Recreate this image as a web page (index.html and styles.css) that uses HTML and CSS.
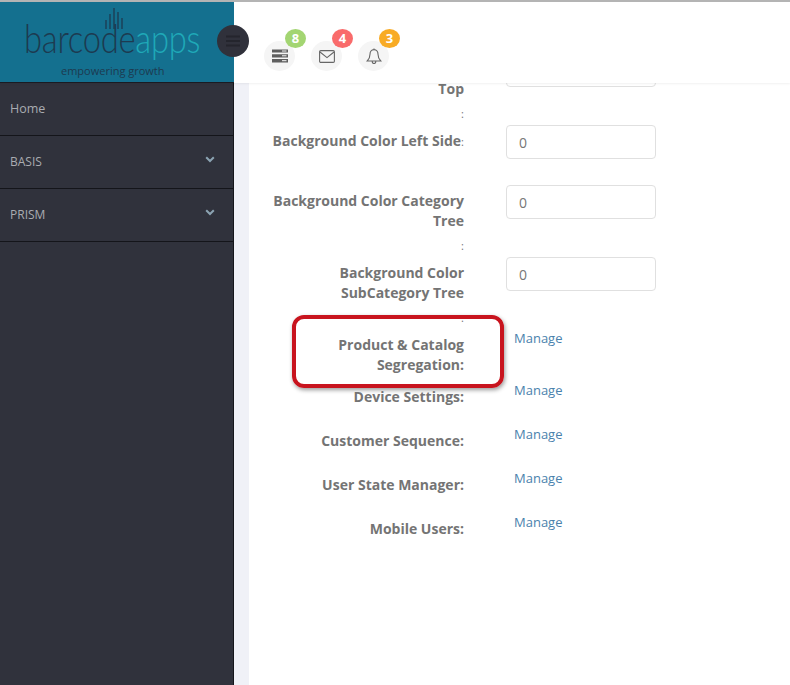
FILE: index.html
```html
<!DOCTYPE html>
<html lang="en">
<head>
<meta charset="utf-8">
<title>Settings</title>
<link rel="stylesheet" href="styles.css">
</head>
<body>
<div class="app">
  <header class="header">
    <div class="brand">
      <svg class="brand-bars" width="20" height="24" viewBox="0 0 20 24" aria-hidden="true">
        <path d="M2 13V22M6 7V22M10 1V22M14 5V22M18 11V22" stroke="#1d3a50" stroke-width="1.3" fill="none"/>
      </svg>
      <div class="brand-name">barcode<span class="brand-accent">apps</span></div>
      <div class="brand-tag">empowering growth</div>
    </div>
    <button class="menu-toggle" aria-label="Menu">
      <svg width="16" height="12" viewBox="0 0 16 12" aria-hidden="true">
        <path d="M1 1.5H15M1 6H15M1 10.5H15" stroke="#24252d" stroke-width="2" fill="none"/>
      </svg>
    </button>
    <div class="tools">
      <div class="tool">
        <svg width="16" height="14" viewBox="0 0 16 14" aria-hidden="true">
          <path d="M0 0.5H16V3.6H0ZM0 5.2H16V8.4H0ZM0 10H16V13.5H0Z" fill="#5f5f5f"/>
          <path d="M10 2H14.5M10 6.8H14.5M10 11.7H14.5" stroke="#f5f5f5" stroke-width="1"/>
        </svg>
        <span class="badge badge-green">8</span>
      </div>
      <div class="tool">
        <svg width="16" height="13" viewBox="0 0 16 13" aria-hidden="true">
          <rect x="0.6" y="0.6" width="14.8" height="11.8" rx="1.2" fill="none" stroke="#666" stroke-width="1.1"/>
          <path d="M1 2L8 7.6L15 2" fill="none" stroke="#666" stroke-width="1.1"/>
        </svg>
        <span class="badge badge-red">4</span>
      </div>
      <div class="tool">
        <svg width="16" height="17" viewBox="0 0 16 17" aria-hidden="true">
          <path d="M8 1.6C5.2 1.6 4 3.8 4 6.2C4 9.6 3 11.2 1.2 13H14.8C13 11.2 12 9.6 12 6.2C12 3.8 10.8 1.6 8 1.6ZM8 0.5V1.6M6.2 13.2C6.2 16.2 9.8 16.2 9.8 13.2" fill="none" stroke="#666" stroke-width="1.1"/>
        </svg>
        <span class="badge badge-amber">3</span>
      </div>
    </div>
  </header>
  <div class="body">
    <nav class="sidebar">
      <a class="nav-item">Home</a>
      <a class="nav-item nav-caps">BASIS
        <svg class="chev" width="10" height="7" viewBox="0 0 10 7" aria-hidden="true"><path d="M1.2 1.2L5 5L8.8 1.2" fill="none" stroke="#8ba3b2" stroke-width="2"/></svg>
      </a>
      <a class="nav-item nav-caps">PRISM
        <svg class="chev" width="10" height="7" viewBox="0 0 10 7" aria-hidden="true"><path d="M1.2 1.2L5 5L8.8 1.2" fill="none" stroke="#8ba3b2" stroke-width="2"/></svg>
      </a>
    </nav>
    <div class="gutter"></div>
    <main class="main">
      <form class="form">
        <div class="row row-colon">
          <label class="label"><b>Top</b><span class="colon colon-block">:</span></label>
          <div class="value"><input class="input" value="0"></div>
        </div>
        <div class="row row-input">
          <label class="label"><b>Background Color Left Side</b><span class="colon">:</span></label>
          <div class="value"><input class="input" value="0"></div>
        </div>
        <div class="row row-colon">
          <label class="label"><b>Background Color Category<br>Tree</b><span class="colon colon-block">:</span></label>
          <div class="value"><input class="input" value="0"></div>
        </div>
        <div class="row row-colon">
          <label class="label"><b>Background Color<br>SubCategory Tree</b><span class="colon colon-block">:</span></label>
          <div class="value"><input class="input" value="0"></div>
        </div>
        <div class="row row-link row-highlight">
          <label class="label"><b>Product &amp; Catalog<br>Segregation:</b></label>
          <div class="value"><a class="link">Manage</a></div>
          <div class="callout"></div>
        </div>
        <div class="row row-link">
          <label class="label"><b>Device Settings:</b></label>
          <div class="value"><a class="link">Manage</a></div>
        </div>
        <div class="row row-link">
          <label class="label"><b>Customer Sequence:</b></label>
          <div class="value"><a class="link">Manage</a></div>
        </div>
        <div class="row row-link">
          <label class="label"><b>User State Manager:</b></label>
          <div class="value"><a class="link">Manage</a></div>
        </div>
        <div class="row row-link">
          <label class="label"><b>Mobile Users:</b></label>
          <div class="value"><a class="link">Manage</a></div>
        </div>
      </form>
    </main>
  </div>
</div>
</body>
</html>
```

FILE: styles.css
```css
* { box-sizing: border-box; }
html, body { margin: 0; height: 100%; }
body { font-family: "Open Sans", sans-serif; background: #fff; overflow: hidden; }

.app { width: 790px; height: 685px; display: flex; flex-direction: column; overflow: hidden; }

.header {
  position: relative;
  z-index: 2;
  flex: none;
  height: 83px;
  border-top: 2px solid #b4b4b4;
  display: flex;
  background: #fff;
  box-shadow: 0 1px 2px rgba(0, 0, 0, .06);
}

.brand {
  position: relative;
  width: 234px;
  flex: none;
  background: #14708f;
  border-bottom: 1px solid #1a1b22;
  color: #1d3a50;
  text-align: center;
}
.brand-bars { position: absolute; left: 104px; top: 5px; }
.brand-name {
  position: absolute;
  left: 24px;
  top: 13px;
  font-family: Lato, sans-serif;
  font-weight: 300;
  font-size: 39px;
  line-height: 46px;
  letter-spacing: -.3px;
  white-space: nowrap;
  transform: scaleX(.84);
  transform-origin: left center;
}
.brand-accent { color: #1fa9b8; }
.brand-tag {
  position: absolute;
  left: 61px;
  top: 61px;
  font-size: 11px;
  line-height: 16px;
  white-space: nowrap;
}

.menu-toggle {
  position: absolute;
  left: 217px;
  top: 23px;
  width: 32px;
  height: 32px;
  padding: 0;
  border: 0;
  border-radius: 50%;
  background: #30313b;
  display: flex;
  align-items: center;
  justify-content: center;
}

.tools { display: flex; gap: 16px; padding: 39px 0 0 30px; }
.tool {
  position: relative;
  width: 31px;
  height: 30px;
  border-radius: 50%;
  background: #f5f5f5;
  display: flex;
  align-items: center;
  justify-content: center;
}
.badge {
  position: absolute;
  left: 21px;
  top: -12px;
  width: 21px;
  height: 19px;
  border-radius: 50%;
  color: #fff;
  font-size: 13px;
  font-weight: 700;
  line-height: 19px;
  text-align: center;
}
.badge-green { background: #a3d572; }
.badge-red { background: #f96b6b; }
.badge-amber { background: #f8ab25; }

.body { flex: 1; display: flex; min-height: 0; }

.sidebar { width: 234px; flex: none; background: #30323c; border-right: 1px solid #15161b; }
.nav-item {
  height: 53px;
  padding: 0 10px 2px;
  display: flex;
  align-items: center;
  justify-content: space-between;
  border-bottom: 1px solid #14151a;
  color: #a9acb1;
  font-size: 12.5px;
}
.nav-caps { font-size: 12px; }
.chev { margin: -4px 8px 0 0; }

.gutter { width: 15px; flex: none; background: #f0f1f7; }

.main { flex: 1; min-width: 0; overflow: hidden; background: #fff; }
.form { margin-top: -30px; }

.row { position: relative; display: flex; }
.row-input { height: 60px; }
.row-colon { height: 72px; }
.row-link { min-height: 44px; }
.row-highlight { height: 52px; }

.label {
  width: 215px;
  flex: none;
  padding-top: 6px;
  color: #747474;
  font-size: 14px;
  line-height: 20px;
  text-align: right;
}
.row-colon:first-child .label { padding-top: 26px; }
.label b { font-weight: 700; }
.colon { font-size: 11px; font-weight: 400; color: #747474; }
.colon-block { display: block; height: 26px; line-height: 30px; }

.value { margin-left: 42px; }
.input {
  display: block;
  width: 150px;
  height: 34px;
  padding: 6px 12px;
  border: 1px solid #e0e0e0;
  border-radius: 4px;
  background: #fff;
  color: #777;
  font-family: "Open Sans", sans-serif;
  font-size: 14px;
}
.link {
  display: block;
  padding-left: 8px;
  color: #4a82ad;
  font-size: 13px;
  line-height: 18px;
}

.callout {
  position: absolute;
  left: 43px;
  top: -14px;
  width: 212px;
  height: 73px;
  border: 4px solid #c8141e;
  border-radius: 12px;
  box-shadow: 1px 2px 4px rgba(0, 0, 0, .4);
  pointer-events: none;
}
```
